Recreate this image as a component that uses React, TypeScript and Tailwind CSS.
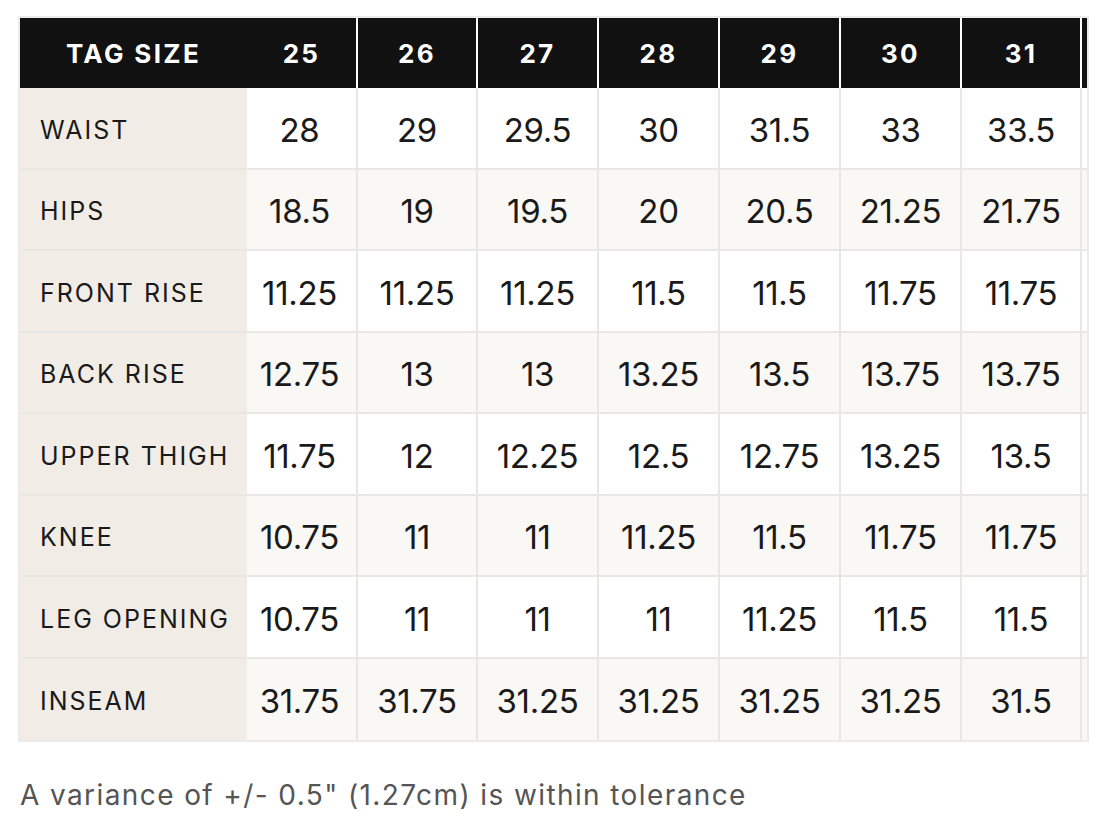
import React from "react";

const sizes = ["25", "26", "27", "28", "29", "30", "31"];
const widths = ["w-[111px]", "w-[120px]", "w-[121px]", "w-[121px]", "w-[121px]", "w-[121px]", "w-[120px]"];

const rows: [string, string[]][] = [
  ["WAIST", ["28", "29", "29.5", "30", "31.5", "33", "33.5"]],
  ["HIPS", ["18.5", "19", "19.5", "20", "20.5", "21.25", "21.75"]],
  ["FRONT RISE", ["11.25", "11.25", "11.25", "11.5", "11.5", "11.75", "11.75"]],
  ["BACK RISE", ["12.75", "13", "13", "13.25", "13.5", "13.75", "13.75"]],
  ["UPPER THIGH", ["11.75", "12", "12.25", "12.5", "12.75", "13.25", "13.5"]],
  ["KNEE", ["10.75", "11", "11", "11.25", "11.5", "11.75", "11.75"]],
  ["LEG OPENING", ["10.75", "11", "11", "11", "11.25", "11.5", "11.5"]],
  ["INSEAM", ["31.75", "31.75", "31.25", "31.25", "31.25", "31.25", "31.5"]],
];

export default function App() {
  return (
    <div className="min-h-screen bg-white pl-[18px] pt-[16px] font-['Inter','Liberation_Sans',sans-serif] text-[#1a1a1a]">
      <div className="w-[1071px] overflow-hidden border-2 border-[#ebebeb]">
        {/* header */}
        <div className="flex h-[70px] bg-[#111111] text-[26px] font-bold tracking-[0.09em] text-white">
          <div className="flex w-[227px] items-center justify-center">TAG SIZE</div>
          {sizes.map((s, i) => (
            <div key={s} className={`flex ${widths[i]} items-center justify-center border-r-2 border-white`}>
              {s}
            </div>
          ))}
          <div className="flex-1" />
        </div>
        {/* body */}
        {rows.map(([label, vals], r) => (
          <div
            key={label}
            className={`flex h-[81.5px] ${r < rows.length - 1 ? "border-b-2" : ""} border-[#e9e7e3] ${r % 2 ? "bg-[#f9f8f5]" : "bg-white"}`}
          >
            <div className="flex w-[227px] items-center bg-[#f1ede6] pl-[20px] pt-[5px] text-[25px] tracking-[0.08em]">
              {label}
            </div>
            {vals.map((v, i) => (
              <div
                key={i}
                className={`flex ${widths[i]} items-center justify-center border-r-2 border-[#e9e7e3] pt-[5px] text-[33px] tracking-[-0.01em] ${i === 0 ? "pr-[4px]" : ""}`}
              >
                {v}
              </div>
            ))}
            <div className="flex-1" />
          </div>
        ))}
      </div>
      <p className="mt-[32px] pl-[2px] text-[28px] tracking-[0.05em] text-[#555555]">
        A variance of +/- 0.5" (1.27cm) is within tolerance
      </p>
    </div>
  );
}
